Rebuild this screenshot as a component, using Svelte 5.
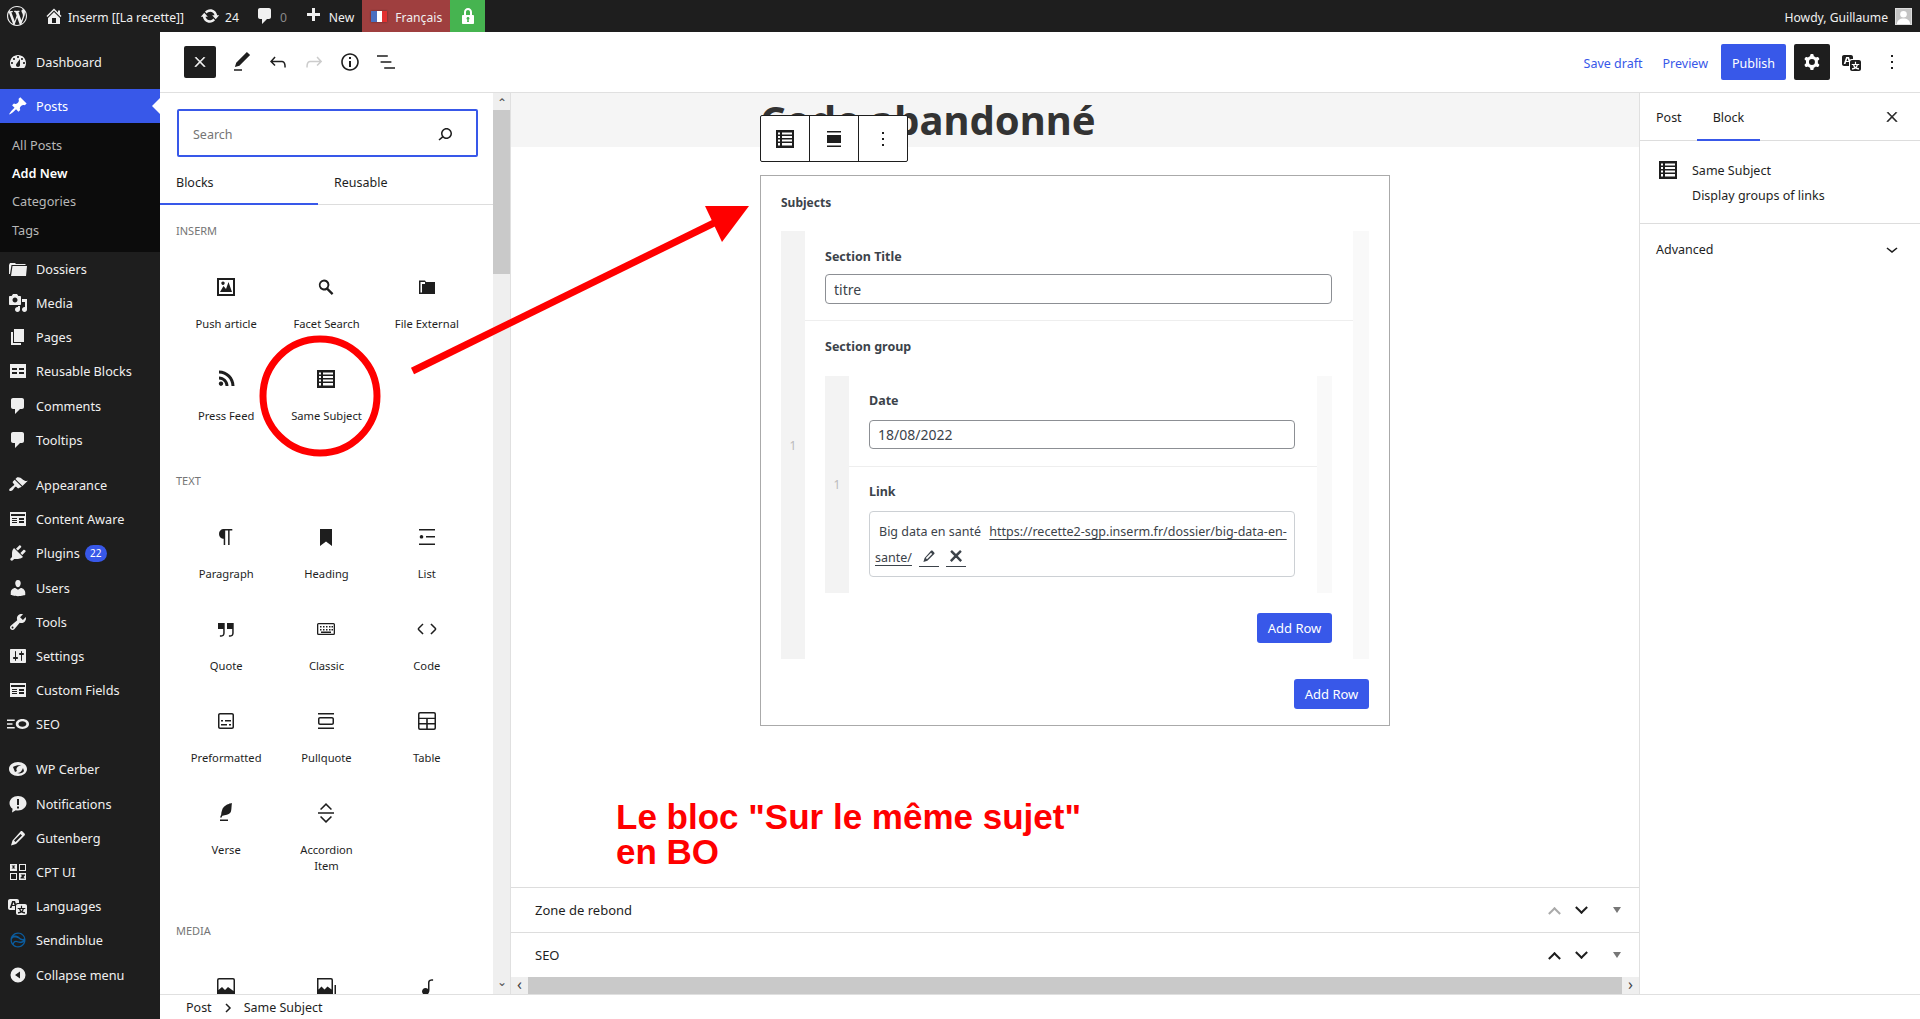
<script>
  const di = {
    dashboard: "M3.76 16h12.48c1.1-1.37 1.76-3.11 1.76-5 0-4.42-3.58-8-8-8s-8 3.58-8 8c0 1.89.66 3.63 1.76 5zM10 4c.55 0 1 .45 1 1s-.45 1-1 1-1-.45-1-1 .45-1 1-1zM6 6c.55 0 1 .45 1 1s-.45 1-1 1-1-.45-1-1 .45-1 1-1zm8 0c.55 0 1 .45 1 1s-.45 1-1 1-1-.45-1-1 .45-1 1-1zm-5.37 5.55L12 7v6c0 1.1-.9 2-2 2s-2-.9-2-2c0-.57.24-1.08.63-1.45zM4 10c.55 0 1 .45 1 1s-.45 1-1 1-1-.45-1-1 .45-1 1-1zm12 0c.55 0 1 .45 1 1s-.45 1-1 1-1-.45-1-1 .45-1 1-1z",
    pin: "M10.44 3.02l1.82-1.82 6.36 6.35-1.83 1.82c-1.05-.68-2.48-.57-3.41.36l-.75.75c-.92.93-1.04 2.35-.35 3.41l-1.83 1.82-2.41-2.41-2.8 2.79c-.42.42-3.38 2.71-3.8 2.29s1.86-3.39 2.28-3.81l2.79-2.79L4.1 9.36l1.83-1.82c1.05.69 2.48.57 3.4-.36l.75-.75c.93-.92 1.05-2.35.36-3.41z",
    folder: "M1 6l1-2h5l1 1h9l1 1H3.5L2 15H1zM4.5 7H19l-1 10H3z",
    media: "M13 11V4c0-.55-.45-1-1-1h-1.67L9 1H5L3.67 3H2c-.55 0-1 .45-1 1v7c0 .55.45 1 1 1h10c.55 0 1-.45 1-1zM7 4.5c1.38 0 2.5 1.12 2.5 2.5S8.38 9.5 7 9.5 4.5 8.38 4.5 7 5.62 4.5 7 4.5zM14 6h5v10.5c0 1.38-1.12 2.5-2.5 2.5S14 17.88 14 16.5s1.12-2.5 2.5-2.5c.17 0 .34.02.5.05V9h-3V6zm-4 8.05V13h2v3.5c0 1.38-1.12 2.5-2.5 2.5S7 17.88 7 16.5 8.12 14 9.5 14c.17 0 .34.02.5.05z",
    pages: "M6 15V2h10v13H6zm-1 1h8v2H3V5h2v11z",
    table: "M2 3h16v14H2zM4 7v2h5V7zm7 0v2h5V7zM4 11v2h5v-2zm7 0v2h5v-2z",
    comment: "M5 2h9c1.1 0 2 .9 2 2v7c0 1.1-.9 2-2 2h-2l-5 5v-5H5c-1.1 0-2-.9-2-2V4c0-1.1.9-2 2-2z",
    brush: "M14.48 11.06L7.41 3.99l1.5-1.5c.5-.56 2.3-.47 3.51.32 1.21.8 1.43 1.28 2.91 2.1 1.18.64 2.45 1.26 4.45.85zm-.71.71L6.7 4.7 4.93 6.47c-.39.39-.39 1.02 0 1.41l1.06 1.06c.39.39.39 1.03 0 1.42-.6.6-1.43 1.11-2.21 1.69-.35.26-.7.53-1.01.84C1.43 13.23.91 14.74 1.3 15.4c.38.66 1.89 1.15 3.22-.12.33-.31.59-.66.85-1.01.57-.78 1.08-1.61 1.69-2.21.39-.39 1.02-.39 1.41 0l1.06 1.06c.39.39 1.02.39 1.41 0z",
    fields: "M2 3h16v14H2zm1 2v2h14V5zM4 9v1h5V9zm0 2v1h5v-1zm0 2v1h5v-1zm7-4v2h5V9zm0 3v2h5v-2z",
    plugin: "M13.11 4.36L9.87 7.6 8 5.73l3.24-3.24c.35-.34 1.05-.2 1.56.32.52.51.66 1.21.31 1.55zm-8 1.77l.91-1.12 9.01 9.01-1.19.84c-.71.71-2.63 1.16-3.82 1.16H6.14L4.9 17.26c-.59.59-1.54.59-2.12 0-.59-.58-.59-1.53 0-2.12l1.24-1.24v-3.88c0-1.13.4-3.19 1.09-3.89zm7.26 3.97l3.24-3.24c.34-.35 1.04-.21 1.55.31.52.51.66 1.21.31 1.55l-3.24 3.25z",
    users: "M10 9.25c-2.27 0-2.73-3.44-2.73-3.44C7 4.02 7.82 2 9.97 2c2.16 0 2.98 2.02 2.71 3.81 0 0-.41 3.44-2.68 3.44zm0 2.57L12.72 10c2.39 0 4.52 2.33 4.52 4.53v2.49s-3.65 1.13-7.24 1.13c-3.65 0-7.24-1.13-7.24-1.13v-2.49c0-2.25 1.94-4.48 4.47-4.48z",
    tools: "M16.68 9.77c-1.34 1.34-3.3 1.67-4.95.99l-5.41 6.52c-.99.99-2.59.99-3.58 0s-.99-2.59 0-3.57l6.52-5.42c-.68-1.65-.35-3.61.99-4.95 1.28-1.28 3.12-1.62 4.72-1.06l-2.89 2.89 2.82 2.82 2.86-2.87c.53 1.58.18 3.39-1.08 4.65zM3.81 16.21c.4.39 1.04.39 1.43 0 .4-.4.4-1.04 0-1.43-.39-.4-1.03-.4-1.43 0-.39.39-.39 1.03 0 1.43z",
    settings: "M18 16V4c0-.55-.45-1-1-1H3c-.55 0-1 .45-1 1v12c0 .55.45 1 1 1h14c.55 0 1-.45 1-1zM8 11h1c.55 0 1 .45 1 1s-.45 1-1 1H8v1.5c0 .28-.22.5-.5.5s-.5-.22-.5-.5V13H6c-.55 0-1-.45-1-1s.45-1 1-1h1V5.5c0-.28.22-.5.5-.5s.5.22.5.5V11zm5-2h-1c-.55 0-1-.45-1-1s.45-1 1-1h1V5.5c0-.28.22-.5.5-.5s.5.22.5.5V7h1c.55 0 1 .45 1 1s-.45 1-1 1h-1v5.5c0 .28-.22.5-.5.5s-.5-.22-.5-.5V9z",
    seo: "M-2 6h9v1.3h-9zM-2 9.4h7v1.3h-7zM-2 12.8h9v1.3h-9zM14 5.5c3.6 0 6 2 6 4.5s-2.4 4.5-6 4.5-6-2-6-4.5 2.4-4.5 6-4.5zm0 2c-2 0-3.6 1.1-3.6 2.5s1.6 2.5 3.6 2.5 3.6-1.1 3.6-2.5S16 7.5 14 7.5z",
    cerber: "M10 3c5 0 9 3 9 7s-4 7-9 7-9-3-9-7 4-7 9-7zm-5 5l2 5 2-1c-1-1-1-3 1-4.500 1-.7 3-.8 4-.5-2-1.500-6-1-9 1zm10 1c-1 3-3 5-6 5 3 1 6 0 7-2z",
    notify: "M10 2c4.700 0 8.500 3.200 8.500 7.300 0 4-3.800 7.200-8.500 7.200-.8 0-1.500-.1-2.200-.3L4 18.500l.6-3.700c-1.900-1.300-3.100-3.300-3.100-5.500C1.500 5.200 5.300 2 10 2zM9 5v6h2V5zm0 7.500v2h2v-2z",
    pencil: "M14.500 3.500l2 2c.6.6.6 1.500 0 2.100L8 16l-5 1.500L4.500 12.500 12.500 3.500c.5-.6 1.400-.6 2 0zM6 12.500l1.500 1.500L14 7.500 12.500 6z",
    cpt: "M2 2h7v7H2zM3.500 3.500l1.500 1.500-1.500 1.500h4L6 5l1.500-1.500zM11 2h7v7h-7zm1 1v5h5V3zM2 11h7v7H2zm1 1v5h5v-5zM11 11h7v7h-7zM12.500 12.500L14 14l-1.500 1.500 0 1h4.500l-1.500-1.500 1.500-1.500v-1z",
    lang: "M11 7H9.49c-.63 0-1.25.3-1.59.7L7 5H4.13l-2.39 7h1.69l.74-2H7v4H2c-1.1 0-2-.9-2-2V5c0-1.1.9-2 2-2h7c1.1 0 2 .9 2 2v2zM6.51 9H4.49l1-2.93zM10 8h7c1.1 0 2 .9 2 2v7c0 1.1-.9 2-2 2h-7c-1.1 0-2-.9-2-2v-7c0-1.1.9-2 2-2zm7.25 5v-1.08h-3.17V9.75h-1.16v2.17H9.75V13h1.28c.11.85.56 1.85 1.28 2.62-.87.36-1.89.62-2.31.62-.01.02.22.97.2 1.46.84 0 2.21-.5 3.28-1.15 1.09.65 2.48 1.15 3.34 1.15-.02-.49.2-1.44.2-1.46-.43 0-1.49-.26-2.38-.63.7-.77 1.14-1.77 1.25-2.61h1.36zm-3.81 1.93c-.5-.46-.85-1.13-1.01-1.93h2.09c-.17.8-.51 1.47-1 1.93l-.04.03s-.03-.02-.04-.03z",
    send: "M10 2.500c4.200 0 7.500 3.300 7.500 7.500s-3.300 7.500-7.500 7.500-7.500-3.300-7.500-7.500 3.300-7.500 7.500-7.500zm0 1.200c-1.800 0-3.400.8-4.500 2 1.500-.5 3.500-.3 5 .8 1.200.9 2 2.200 4 2.500 1 .1 1.400-.2 1.700-.5-.5-2.700-3.100-4.800-6.200-4.800zM3.800 10c0 1.200.3 2.300 1 3.300.5-1.700 1.700-2.500 3.200-2.500 1.300 0 2.500.8 4 .8 1.200 0 2.300-.5 3-1.200-1.500.2-2.700-.5-3.800-1.400-1.700-1.300-4-1.900-6-1.200-.9.700-1.400 1.700-1.400 2.200zm2 4.500c1 1 2.700 1.800 4.200 1.800 2.700 0 5-1.800 5.900-4.200-1 .8-2.500 1.200-3.900 1-1.300-.2-2.700-1-4-1-1.300 0-2 1-2.200 2.400z",
    collapse: "M10 2.500a7.500 7.500 0 1 1 0 15 7.500 7.500 0 0 1 0-15zM12 6.500v7L7 10z",
    wp: "M20 10c0-5.510-4.490-10-10-10C4.480 0 0 4.490 0 10c0 5.520 4.480 10 10 10 5.510 0 10-4.480 10-10zM7.780 15.370L4.370 6.220c.55-.02 1.170-.08 1.170-.08.5-.06.44-1.130-.06-1.110 0 0-1.450.11-2.370.11-.18 0-.37 0-.58-.01C4.120 2.690 6.870 1.110 10 1.110c2.330 0 4.450.87 6.050 2.340-.68-.11-1.650.39-1.650 1.580 0 .74.45 1.360.9 2.100.35.61.55 1.360.55 2.460 0 1.490-1.400 5-1.400 5l-3.030-8.370c.54-.02.82-.17.82-.17.5-.05.44-1.250-.06-1.220 0 0-1.440.12-2.380.12-.87 0-2.330-.12-2.330-.12-.5-.03-.56 1.200-.06 1.220l.92.08 1.260 3.410zM17.410 10c.24-.64.74-1.870.43-4.250.7 1.290 1.050 2.710 1.050 4.250 0 3.290-1.730 6.240-4.400 7.780.97-2.590 1.940-5.200 2.920-7.780zM6.100 18.090C3.120 16.650 1.110 13.530 1.110 10c0-1.300.23-2.480.72-3.590C3.250 10.300 4.670 14.200 6.100 18.090zm4.030-6.630l2.580 6.980c-.86.29-1.760.45-2.710.45-.79 0-1.570-.11-2.290-.33.81-2.380 1.620-4.740 2.420-7.100z",
    home: "M16 8.500l1.530 1.530-1.060 1.060L10 4.620l-6.470 6.470-1.060-1.060L10 2.500l4 4v-2h2v4zm-6-2.460l6 5.990V18H4v-5.970zM12 17v-5H8v5h4z",
    update: "M10.200 3.280c3.530 0 6.430 2.610 6.920 6h2.080l-3.500 4-3.500-4h2.320c-.45-1.970-2.210-3.450-4.320-3.450-1.450 0-2.730.71-3.540 1.780L4.950 5.660C6.230 4.200 8.110 3.280 10.200 3.280zm-.4 13.440c-3.520 0-6.430-2.610-6.920-6H.8l3.500-4c1.170 1.330 2.330 2.670 3.500 4H5.480c.45 1.970 2.210 3.450 4.320 3.450 1.450 0 2.730-.71 3.540-1.780l1.710 1.950c-1.280 1.460-3.150 2.380-5.250 2.380z",
    plus: "M17 7v3h-5v5H9v-5H4V7h5V2h3v5h5z",
    lock: "M14 9h1c.55 0 1 .45 1 1v7c0 .55-.45 1-1 1H5c-.55 0-1-.45-1-1v-7c0-.55.45-1 1-1h1V6c0-2.210 1.790-4 4-4s4 1.790 4 4v3zm-2 0V6c0-1.100-.9-2-2-2s-2 .9-2 2v3h4zm-1 7l-.36-2.150c.51-.24.86-.75.86-1.350 0-.83-.67-1.500-1.500-1.500s-1.500.67-1.500 1.500c0 .6.35 1.110.86 1.350L9 16h2z"
  };

  const wp = {
    close: "M13 11.8l6.1-6.3-1-1-6.1 6.2-6.1-6.2-1 1 6.1 6.3-6.5 6.7 1 1 6.5-6.6 6.5 6.6 1-1z",
    edit: "M20.1 5.1L16.9 2 6.2 12.7l-1.300 4.400 4.500-1.300L20.100 5.100zM4 20.800h8v-1.500H4v1.500z",
    undo: "M18.300 11.700c-.6-.6-1.400-.9-2.300-.9H6.700l2.900-3.300-1.100-1-4.500 5L8.500 16l1-1-2.700-2.700H16c.5 0 .9.2 1.300.5 1 1 1 3.400 1 4.500v.3h1.500v-.2c0-1.500 0-4.300-1.500-5.700z",
    redo: "M15.600 6.500l-1.100 1 2.900 3.300H8c-.9 0-1.700.3-2.300.9-1.400 1.500-1.400 4.200-1.400 5.600v.2h1.500v-.3c0-1.100 0-3.500 1-4.500.3-.3.7-.5 1.300-.5h9.200L14.500 15l1.100 1.100 4.600-4.600-4.600-5z",
    info: "M12 3.200c-4.800 0-8.800 3.900-8.800 8.800 0 4.800 3.900 8.800 8.800 8.800 4.800 0 8.800-3.900 8.800-8.800 0-4.800-4-8.800-8.800-8.800zm0 16c-4 0-7.200-3.300-7.200-7.200C4.800 8 8 4.800 12 4.800s7.200 3.300 7.200 7.200c0 4-3.200 7.200-7.200 7.200zM11 17h2v-6h-2v6zm0-8h2V7h-2v2z",
    listview: "M13.800 5.200H3v1.500h10.800V5.200zm-3.600 12v1.500H21v-1.500H10.200zm7.200-6H6.600v1.500h10.800v-1.500z",
    search: "M13.500 6C10.500 6 8 8.500 8 11.500c0 1.100.3 2.100.9 3l-3.400 3 1 1.100 3.400-2.900c1 .9 2.200 1.400 3.600 1.400 3 0 5.500-2.500 5.500-5.500C19 8.500 16.500 6 13.500 6zm0 9.500c-2.200 0-4-1.800-4-4s1.800-4 4-4 4 1.800 4 4-1.800 4-4 4z",
    cog: "M10.289 4.836A1 1 0 0111.275 4h1.306a1 1 0 01.987.836l.244 1.466c.787.26 1.503.679 2.108 1.218l1.393-.522a1 1 0 011.216.437l.653 1.13a1 1 0 01-.23 1.273l-1.148.944a6.025 6.025 0 010 2.435l1.149.946a1 1 0 01.23 1.272l-.653 1.13a1 1 0 01-1.216.437l-1.394-.522c-.605.54-1.32.958-2.108 1.218l-.244 1.466a1 1 0 01-.987.836h-1.306a1 1 0 01-.986-.836l-.244-1.466a5.995 5.995 0 01-2.108-1.218l-1.394.522a1 1 0 01-1.217-.436l-.653-1.131a1 1 0 01.23-1.272l1.149-.946a6.026 6.026 0 010-2.435l-1.148-.944a1 1 0 01-.23-1.272l.653-1.131a1 1 0 011.217-.437l1.393.522a5.994 5.994 0 012.108-1.218l.244-1.466zM14.929 12a3 3 0 11-6 0 3 3 0 016 0z",
    more: "M13 19h-2v-2h2v2zm0-6h-2v-2h2v2zm0-6h-2V5h2v2z",
    down: "M17.500 11.600L12 16l-5.500-4.400.9-1.200L12 14l4.500-3.600 1 1.200z",
    subject: "M3 3h18v18H3zM5 5.500v2h2v-2zm4 0v2h10v-2zM5 9v2h2V9zm4 0v2h10V9zM5 12.500v2h2v-2zm4 0v2h10v-2zM5 16v2.500h2V16zm4 0v2.500h10V16z",
    align: "M5 8h14v8H5zM5 4h14v1.500H5zM5 18.500h14V20H5z"
  };

  const blockIcons = {
    push: "M3 3h18v18H3zM5 5v14h14V5zM6 17l3.500-6 2.500 3 2.500-7 3.500 10zM9 6.500a1.700 1.700 0 1 1-.01 0z",
    facet: "M10 4.500a5.500 5.500 0 0 1 4.400 8.800l5 5-1.600 1.600-5-5A5.500 5.500 0 1 1 10 4.500zm0 2a3.500 3.500 0 1 0 .01 0z",
    file: "M4 5.500h6l1 1.500h9v12H4zM5.500 7v10.500H7V9h3V7z",
    rss: "M5 9.500c5.200 0 9.500 4.300 9.500 9.500h-3c0-3.600-2.900-6.500-6.500-6.500zM5 3.500c8.600 0 15.500 6.900 15.500 15.500h-3C17.500 12.100 11.900 6.500 5 6.500zM7 14.500a2.200 2.200 0 1 1-.01 0z",
    subject: wp.subject,
    para: "M18.300 4H9.900v-.1l-.9.2c-2.300.4-4 2.400-4 4.800s1.700 4.400 4 4.800l.7.1V20h1.500V5.500h2.900V20h1.500V5.500h2.700V4z",
    heading: "M6 4h12v17l-6-4.500L6 21z",
    list: "M4 4h16v1.500H4zM4 18.500h16V20H4zM11 11h9v1.500h-9zM6.500 10a1.800 1.800 0 1 1-.01 0z",
    quote: "M13 6v6h5.200v4c0 .8-.2 1.400-.5 1.700-.6.6-1.600.6-2.500.5h-.3v1.500h.5c1 0 2.300-.1 3.300-1 .6-.6 1-1.600 1-2.800V6H13zm-9 6h5.200v4c0 .8-.2 1.400-.5 1.700-.6.6-1.600.6-2.500.5h-.3v1.500h.5c1 0 2.300-.1 3.300-1 .6-.6 1-1.600 1-2.800V6H4v6z",
    keyboard: "M4.500 6h15A1.500 1.500 0 0 1 21 7.500v9a1.500 1.500 0 0 1-1.500 1.500h-15A1.500 1.500 0 0 1 3 16.500v-9A1.500 1.500 0 0 1 4.500 6zm0 1.300l-.2.200v9l.2.200h15l.2-.2v-9l-.2-.2zM6 9h1.500v1.500H6zm3 0h1.500v1.500H9zm3 0h1.500v1.500H12zm3 0h1.500v1.500H15zm2.500 0H19v1.500h-1.500zM6 12h1.500v1.500H6zm3 0h1.500v1.500H9zm3 0h1.500v1.500H12zm3 0h1.500v1.500H15zm2.500 0H19v1.500h-1.500zM7 14.500h10V16H7z",
    code: "M20.800 10.700l-4.300-4.300-1.100 1.100 4.300 4.300c.1.100.1.3 0 .4l-4.300 4.300 1.100 1.100 4.300-4.300c.7-.8.7-1.900 0-2.600zM4.200 11.800l4.300-4.300-1-1-4.300 4.300c-.7.700-.7 1.800 0 2.500l4.300 4.300 1.100-1.100-4.300-4.300c-.2-.1-.2-.3-.1-.4z",
    pre: "M18 4H6c-1.100 0-2 .9-2 2v12c0 1.100.9 2 2 2h12c1.100 0 2-.9 2-2V6c0-1.100-.9-2-2-2zm.5 14c0 .3-.2.5-.5.5H6c-.3 0-.5-.2-.5-.5V6c0-.3.2-.5.5-.5h12c.3 0 .5.2.5.5v12zM7 16.500h6V15H7v1.500zm4-4h6V11h-6v1.500zM9 11H7v1.500h2V11zm6 5.500h2V15h-2v1.500z",
    pull: "M18 8H6c-1.100 0-2 .9-2 2v4c0 1.100.9 2 2 2h12c1.100 0 2-.9 2-2v-4c0-1.100-.9-2-2-2zm.5 6c0 .3-.2.5-.5.5H6c-.3 0-.5-.2-.5-.5v-4c0-.3.2-.5.5-.5h12c.3 0 .5.2.5.500v4zM4 4v1.500h16V4H4zm0 16h16v-1.500H4V20z",
    table: "M5 3h14a2 2 0 0 1 2 2v14a2 2 0 0 1-2 2H5a2 2 0 0 1-2-2V5a2 2 0 0 1 2-2zm0 1.500l-.5.500v3.700h15V5l-.5-.5zM4.500 10v4h6.700v-4zm8.300 0v4h6.700v-4zM4.500 15.500V19l.5.500h6.200v-4zm8.300 0v4H19l.5-.5v-3.500z",
    verse: "M17.800 2l-.9.3c-.1 0-3.600 1-5.200 2.100C10 5.500 9.300 6.500 8.900 7.100c-.6.900-1.700 4.700-1.700 6.300l-.9 2.300c-.2.400 0 .8.400 1 .1 0 .2.1.3.1.3 0 .6-.2.7-.5l.6-1.500c.3 0 .7-.1 1.200-.2.700-.1 1.400-.3 2.200-.5.8-.2 1.600-.5 2.400-.8.700-.3 1.400-.7 1.900-1.200s.8-1.200 1-1.900c.2-.7.3-1.600.4-2.400.1-.8.100-1.700.2-2.500 0-.8.1-1.500.2-2.100V2zM6 20h8v-1.500H6V20z",
    accordion: "M12 2l6 6-1.100 1.100L12 4.200 7.100 9.100 6 8zM4 11.200h16v1.600H4zM12 22l-6-6 1.100-1.100 4.900 4.900 4.900-4.900L18 16z",
    image: "M5 3h14a2 2 0 0 1 2 2v14a2 2 0 0 1-2 2H5a2 2 0 0 1-2-2V5a2 2 0 0 1 2-2zm0 1.500l-.5.500v10l3.500-3 3 3 3-3 5.500 4V5l-.5-.5z",
    gallery: "M3 3h14a2 2 0 0 1 2 2v14a2 2 0 0 1-2 2H3zm1.500 1.500v10l3-3 3 3 3-3 4 3V5l-.5-.5zM20.500 10H22v11h-1.500z",
    audio: "M17.700 4.300c-1.200 0-2.800 0-3.800 1-.6.600-.9 1.500-.9 2.600V14c-.6-.6-1.500-1-2.500-1C8.600 13 7 14.600 7 16.500S8.600 20 10.500 20c1.500 0 2.800-1 3.300-2.300.5-.8.700-1.800.7-2.700V7.900c0-.7.200-1.200.5-1.600.6-.6 1.800-.6 2.800-.6h.3V4.300h-.6z"
  };

  const menuA = [
    { name: "Dossiers", d: di.folder },
    { name: "Media", d: di.media },
    { name: "Pages", d: di.pages },
    { name: "Reusable Blocks", d: di.table },
    { name: "Comments", d: di.comment },
    { name: "Tooltips", d: di.comment }
  ];
  const menuB = [
    { name: "Appearance", d: di.brush },
    { name: "Content Aware", d: di.fields },
    { name: "Plugins", d: di.plugin, badge: "22" },
    { name: "Users", d: di.users },
    { name: "Tools", d: di.tools },
    { name: "Settings", d: di.settings },
    { name: "Custom Fields", d: di.fields },
    { name: "SEO", d: di.seo }
  ];
  const menuC = [
    { name: "WP Cerber", d: di.cerber },
    { name: "Notifications", d: di.notify },
    { name: "Gutenberg", d: di.pencil },
    { name: "CPT UI", d: di.cpt },
    { name: "Languages", d: di.lang },
    { name: "Sendinblue", d: di.send, blue: true },
    { name: "Collapse menu", d: di.collapse }
  ];

  // media row is scrolled off under the footer, only its icons show
  const sections = [
    {
      title: "INSERM",
      items: [
        ["Push article", blockIcons.push],
        ["Facet Search", blockIcons.facet],
        ["File External", blockIcons.file],
        ["Press Feed", blockIcons.rss],
        ["Same Subject", blockIcons.subject]
      ]
    },
    {
      title: "TEXT",
      items: [
        ["Paragraph", blockIcons.para],
        ["Heading", blockIcons.heading],
        ["List", blockIcons.list],
        ["Quote", blockIcons.quote],
        ["Classic", blockIcons.keyboard],
        ["Code", blockIcons.code],
        ["Preformatted", blockIcons.pre],
        ["Pullquote", blockIcons.pull],
        ["Table", blockIcons.table],
        ["Verse", blockIcons.verse],
        ["Accordion Item", blockIcons.accordion]
      ]
    },
    {
      title: "MEDIA",
      items: [
        ["", blockIcons.image],
        ["", blockIcons.gallery],
        ["", blockIcons.audio]
      ]
    }
  ];
</script>

{#snippet icon(d, size = 24, box = 24)}
  <svg width={size} height={size} viewBox="0 0 {box} {box}" fill="currentColor"><path fill-rule="evenodd" {d} /></svg>
{/snippet}

{#snippet menuItem(item)}
  <li class="item" class:blue={item.blue}>
    <span class="mi">{@render icon(item.d, item.name === "SEO" ? 22 : 20, 20)}</span>
    <span>{item.name}</span>
    {#if item.badge}<span class="badge">{item.badge}</span>{/if}
  </li>
{/snippet}

<div class="page">
  <header class="adminbar">
    <span class="ab logo">{@render icon(di.wp, 20, 20)}</span>
    <span class="ab site">{@render icon(di.home, 20, 20)}<span>Inserm [[La recette]]</span></span>
    <span class="ab updates">{@render icon(di.update, 20, 20)}<span>24</span></span>
    <span class="ab comments">{@render icon(di.comment, 20, 20)}<span class="dim">0</span></span>
    <span class="ab newpost">{@render icon(di.plus, 20, 20)}<span>New</span></span>
    <span class="ab langitem"><i class="flag"><b></b><b></b><b></b></i><span>Français</span></span>
    <span class="ab lock">{@render icon(di.lock, 20, 20)}</span>
    <span class="howdy"><span>Howdy, Guillaume</span><i class="avatar"><svg width="15" height="15" viewBox="0 0 16 16" fill="#fff"><circle cx="8" cy="5.500" r="3.500" /><path d="M1 16c0-4 3-6 7-6s7 2 7 6z" /></svg></i></span>
  </header>

  <div class="main">
    <nav class="menu">
      <ul class="first">
        <li class="item">
          <span class="mi">{@render icon(di.dashboard, 20, 20)}</span><span>Dashboard</span>
        </li>
      </ul>
      <div class="current"><span class="mi">{@render icon(di.pin, 20, 20)}</span><span>Posts</span></div>
      <ul class="sub">
        <li>All Posts</li>
        <li class="on">Add New</li>
        <li>Categories</li>
        <li>Tags</li>
      </ul>
      <ul class="group">{#each menuA as m}{@render menuItem(m)}{/each}</ul>
      <ul class="group">{#each menuB as m}{@render menuItem(m)}{/each}</ul>
      <ul class="group">{#each menuC as m}{@render menuItem(m)}{/each}</ul>
    </nav>

    <div class="workspace">
      <div class="topbar">
        <div class="tools">
          <button class="closebtn">{@render icon(wp.close, 16)}</button>
          <span class="tb">{@render icon(wp.edit)}</span>
          <span class="tb">{@render icon(wp.undo)}</span>
          <span class="tb muted">{@render icon(wp.redo)}</span>
          <span class="tb">{@render icon(wp.info)}</span>
          <span class="tb">{@render icon(wp.listview)}</span>
        </div>
        <div class="actions">
          <span class="link save">Save draft</span>
          <span class="link preview">Preview</span>
          <button class="publish">Publish</button>
          <button class="cog">{@render icon(wp.cog)}</button>
          <span class="tb trans">{@render icon(di.lang, 20, 20)}</span>
          <span class="tb dots">{@render icon(wp.more)}</span>
        </div>
      </div>

      <div class="panes">
        <aside class="inserter">
          <div class="inserter-body">
            <div class="search">
              <span>Search</span>
              {@render icon(wp.search)}
            </div>
            <div class="tabs">
              <span class="tab active">Blocks</span>
              <span class="tab">Reusable</span>
            </div>
            {#each sections as section}
              <h3>{section.title}</h3>
              <div class="grid">
                {#each section.items as [label, d]}
                  <div class="block-item">
                    {@render icon(d)}
                    {#if label}<span>{label}</span>{/if}
                  </div>
                {/each}
              </div>
            {/each}
          </div>
          <div class="vscroll">
            <span class="arrow">&#x2303;</span>
            <span class="thumb"></span>
            <span class="track"></span>
            <span class="arrow dn">&#x2304;</span>
          </div>
        </aside>

        <main class="editor">
          <div class="canvas">
            <div class="title-strip"><h1>Code abandonné</h1></div>
            <div class="block-toolbar">
              <span>{@render icon(wp.subject)}</span>
              <span>{@render icon(wp.align)}</span>
              <span>{@render icon(wp.more)}</span>
            </div>
            <section class="block">
              <div class="block-label">Subjects</div>
              <div class="repeater">
                <div class="handle">1</div>
                <div class="rows">
                  <div class="field">
                    <label for="sec-title">Section Title</label>
                    <input id="sec-title" value="titre" readonly />
                  </div>
                  <div class="field group-field">
                    <div class="field-label">Section group</div>
                    <div class="repeater nested">
                      <div class="handle">1</div>
                      <div class="rows">
                        <div class="field inner date">
                          <label for="date">Date</label>
                          <input id="date" value="18/08/2022" readonly />
                        </div>
                        <div class="field inner linkfield">
                          <div class="field-label">Link</div>
                          <div class="linkbox">
                            <span class="linktitle">Big data en santé</span>
                            <a href="#top">https://recette2-sgp.inserm.fr/dossier/big-data-en-sante/</a>
                            <span class="lb">{@render icon(di.pencil, 16, 20)}</span>
                            <span class="lb lbx">{@render icon(wp.close, 16)}</span>
                          </div>
                        </div>
                      </div>
                      <div class="rside"></div>
                    </div>
                    <div class="btnrow"><button class="add">Add Row</button></div>
                  </div>
                </div>
                <div class="rside"></div>
              </div>
              <div class="btnrow"><button class="add">Add Row</button></div>
            </section>
          </div>
          <div class="metabox">
            <span>Zone de rebond</span>
            <i class="chev light"></i><i class="chev down"></i><i class="tri"></i>
          </div>
          <div class="metabox">
            <span>SEO</span>
            <i class="chev"></i><i class="chev down"></i><i class="tri"></i>
          </div>
          <div class="hscroll">
            <span class="harrow">&#x2039;</span>
            <span class="hthumb"></span>
            <span class="harrow">&#x203a;</span>
          </div>
        </main>

        <aside class="settings">
          <div class="stabs">
            <span class="stab first-tab">Post</span>
            <span class="stab active">Block</span>
            <span class="sclose">{@render icon(wp.close, 16)}</span>
          </div>
          <div class="card">
            {@render icon(wp.subject)}
            <div>
              <div>Same Subject</div>
              <div class="desc">Display groups of links</div>
            </div>
          </div>
          <div class="advanced">
            <span>Advanced</span>
            {@render icon(wp.down)}
          </div>
        </aside>
      </div>

      <footer class="crumbs">
        <span>Post</span>
        <svg width="8" height="10" viewBox="0 0 8 10" fill="none" stroke="#1e1e1e" stroke-width="1.500"><path d="M2 1l4 4-4 4" /></svg>
        <span>Same Subject</span>
      </footer>
    </div>
  </div>

  <svg class="marks" width="1920" height="1019" viewBox="0 0 1920 1019">
    <circle cx="320" cy="396" r="57" fill="none" stroke="#f00" stroke-width="7" />
    <path d="M412.500 371L716 222" fill="none" stroke="#f00" stroke-width="7" />
    <path d="M749 206H705L722 242z" fill="#f00" />
  </svg>
  <div class="note">Le bloc "Sur le même sujet"<br />en BO</div>
</div>

<style>
  :global(body) {
    margin: 0;
  }
  .page {
    position: relative;
    height: 100vh;
    display: flex;
    flex-direction: column;
    overflow: hidden;
    font-family: "Noto Sans", sans-serif;
    font-size: 12.5px;
    color: #1e1e1e;
    background: #fff;
  }
  svg {
    display: block;
    flex: none;
  }
  ul {
    list-style: none;
    margin: 0;
    padding: 0;
  }
  button {
    font: inherit;
    border: 0;
    cursor: pointer;
  }

  .adminbar {
    height: 32px;
    flex: none;
    display: flex;
    align-items: center;
    background: #1e1e1e;
    color: #f0f0f0;
    font-size: 12.15px;
  }
  .ab {
    height: 32px;
    display: flex;
    align-items: center;
    padding: 0 8px;
    box-sizing: border-box;
  }
  .ab > span,
  .howdy > span {
    padding-top: 2px;
  }
  .logo {
    width: 36px;
    padding: 0 7px;
  }
  .site {
    gap: 4px;
  }
  .updates {
    gap: 5px;
  }
  .comments {
    gap: 5px;
  }
  .dim {
    color: #8a8a8a;
  }
  .newpost {
    gap: 6px;
  }
  .langitem {
    width: 88px;
    gap: 8px;
    padding: 0 0 0 9px;
    background: #9f3f3f;
  }
  .flag {
    display: flex;
    width: 16px;
    height: 11px;
    box-shadow: 0 0 2px #0006;
  }
  .flag b {
    flex: 1;
    background: #fff;
  }
  .flag b:first-child {
    background: #4a6fc0;
  }
  .flag b:last-child {
    background: #e23030;
  }
  .lock {
    width: 35px;
    padding: 0 8px;
    background: #46b450;
    color: #fff;
  }
  .howdy {
    margin-left: auto;
    display: flex;
    align-items: center;
    gap: 7px;
    padding-right: 8px;
  }
  .avatar {
    width: 15px;
    height: 15px;
    background: #c4c4c4;
    overflow: hidden;
    border: 1px solid #ddd;
  }

  .main {
    flex: 1;
    min-height: 0;
    display: flex;
  }
  .menu {
    width: 160px;
    flex: none;
    background: #1e1e1e;
    color: #f0f0f0;
    font-size: 12.7px;
  }
  .first {
    padding: 13px 0 10px;
  }
  .item,
  .current {
    height: 34px;
    display: flex;
    align-items: center;
  }
  .group .item {
    height: 34.2px;
  }
  .group + .group {
    margin-top: 11px;
  }
  .mi {
    width: 36px;
    flex: none;
    display: flex;
    justify-content: center;
    color: #eee;
  }
  .current {
    position: relative;
    background: #3858e9;
    color: #fff;
  }
  .current .mi {
    color: #fff;
  }
  .current::after {
    content: "";
    position: absolute;
    right: 0;
    top: 50%;
    margin-top: -8px;
    border: 8px solid transparent;
    border-right-color: #fff;
    border-left-width: 0;
  }
  .sub {
    background: #0c0c0c;
    padding: 8px 0 8px 12px;
    color: #b8b8b8;
  }
  .sub li {
    height: 28.2px;
    line-height: 28px;
  }
  .sub .on {
    color: #fff;
    font-weight: 600;
  }
  .blue .mi {
    color: #0b5c9e;
  }
  .badge {
    margin-left: 5px;
    min-width: 22px;
    height: 17px;
    line-height: 17px;
    border-radius: 9px;
    background: #3858e9;
    color: #fff;
    font-size: 10px;
    text-align: center;
  }

  .workspace {
    flex: 1;
    min-width: 0;
    display: flex;
    flex-direction: column;
  }
  .topbar {
    height: 61px;
    flex: none;
    box-sizing: border-box;
    border-bottom: 1px solid #e0e0e0;
    display: flex;
    align-items: center;
    justify-content: space-between;
  }
  .tools {
    display: flex;
    align-items: center;
    padding-left: 24px;
    gap: 8px;
  }
  .tools .tb {
    width: 28px;
    display: flex;
    justify-content: center;
  }
  .tools .closebtn {
    margin-right: 3.5px;
  }
  .muted {
    color: #ccc;
  }
  .closebtn {
    width: 32px;
    height: 32px;
    display: flex;
    align-items: center;
    justify-content: center;
    padding: 0;
    background: #1e1e1e;
    color: #fff;
    border-radius: 2px;
  }
  .closebtn path,
  .sclose path {
    stroke: currentColor;
    stroke-width: 1;
  }
  .lbx path {
    stroke: currentColor;
    stroke-width: 2.2;
  }
  .actions {
    display: flex;
    align-items: center;
  }
  .link {
    color: #3858e9;
    padding-top: 2px;
  }
  .save {
    margin-right: 20px;
  }
  .preview {
    margin-right: 13px;
  }
  .publish {
    width: 65px;
    height: 36px;
    padding: 2px 0 0;
    background: #3858e9;
    color: #fff;
    border-radius: 2px;
  }
  .cog {
    width: 36px;
    height: 36px;
    margin-left: 8px;
    padding: 0 6px;
    background: #1e1e1e;
    color: #fff;
    border-radius: 2px;
  }
  .trans {
    margin-left: 12px;
  }
  .dots {
    margin: 0 16px 0 18px;
  }

  .panes {
    flex: 1;
    min-height: 0;
    display: flex;
  }
  .inserter {
    width: 351px;
    flex: none;
    box-sizing: border-box;
    border-right: 1px solid #e0e0e0;
    display: flex;
  }
  .inserter-body {
    flex: 1;
    min-width: 0;
    overflow: hidden;
  }
  .search {
    margin: 16px 15px 0 17px;
    height: 48px;
    box-sizing: border-box;
    border: 2px solid #3858e9;
    border-radius: 2px;
    display: flex;
    align-items: center;
    justify-content: space-between;
    padding: 2px 19px 0 14px;
    color: #757575;
  }
  .search svg {
    color: #1e1e1e;
  }
  .tabs {
    display: flex;
    height: 48px;
    border-bottom: 1px solid #ddd;
    box-sizing: border-box;
  }
  .tab {
    flex: 1;
    padding: 17px 16px 0;
    margin-bottom: -1px;
  }
  .tab.active {
    flex: none;
    width: 158px;
    box-sizing: border-box;
    border-bottom: 2px solid #3858e9;
  }
  h3 {
    margin: 18px 16px 36px;
    font-size: 11px;
    line-height: 16px;
    font-weight: 400;
    color: #757575;
  }
  .grid {
    display: grid;
    grid-template-columns: repeat(3, 100.33px);
    padding: 0 16px;
    margin-bottom: 14px;
  }
  .block-item {
    display: flex;
    flex-direction: column;
    align-items: center;
    text-align: center;
    font-size: 11.2px;
    line-height: 16px;
    gap: 17px;
    padding: 0 13px 35px;
    box-sizing: border-box;
  }
  .grid + h3 {
    margin-top: 0;
  }
  .vscroll {
    width: 17px;
    flex: none;
    display: flex;
    flex-direction: column;
    background: #efefef;
    color: #555;
  }
  .arrow {
    height: 17px;
    line-height: 20px;
    text-align: center;
    font-size: 12px;
  }
  .arrow.dn {
    line-height: 10px;
  }
  .thumb {
    height: 164px;
    background: #c9c9c9;
  }
  .track {
    flex: 1;
  }

  .editor {
    flex: 1;
    min-width: 0;
    display: flex;
    flex-direction: column;
  }
  .canvas {
    position: relative;
    flex: 1;
    min-height: 0;
    overflow: hidden;
  }
  .title-strip {
    height: 54px;
    background: #f5f5f5;
  }
  h1 {
    width: 630px;
    margin: 0 auto;
    font-size: 40px;
    line-height: 54px;
    font-weight: 700;
    color: #333;
  }
  .block-toolbar {
    position: absolute;
    left: 249px;
    top: 22px;
    display: flex;
    height: 47px;
    box-sizing: border-box;
    background: #fff;
    border: 1px solid #1e1e1e;
    border-radius: 2px;
  }
  .block-toolbar span {
    width: 48px;
    display: flex;
    align-items: center;
    justify-content: center;
    border-right: 1px solid #1e1e1e;
  }
  .block-toolbar span:last-child {
    border-right: 0;
  }
  .block {
    width: 630px;
    margin: 28px auto 0;
    box-sizing: border-box;
    border: 1px solid #aaa;
    padding: 17px 20px 16px;
    color: #3c434a;
  }
  .block-label {
    font-weight: 700;
    font-size: 12px;
    line-height: 20px;
    margin-bottom: 18px;
  }
  .repeater {
    display: flex;
  }
  .handle {
    width: 24px;
    flex: none;
    background: #f3f3f3;
    color: #bbb;
    display: flex;
    align-items: center;
    justify-content: center;
    font-size: 12px;
  }
  .rside {
    width: 16px;
    flex: none;
    background: #f9f9f9;
  }
  .rows {
    flex: 1;
    min-width: 0;
  }
  .field {
    padding: 16px 21px 16px 20px;
    border-bottom: 1px solid #eee;
  }
  .field label,
  .field-label {
    display: block;
    font-weight: 700;
    font-size: 12.5px;
    line-height: 20px;
    margin-bottom: 7px;
  }
  .field input {
    display: block;
    width: 100%;
    height: 30px;
    box-sizing: border-box;
    border: 1px solid #8c8f94;
    border-radius: 4px;
    padding: 0 8px;
    font: inherit;
    font-size: 14px;
    color: #3c434a;
    outline: 0;
  }
  .group-field {
    border-bottom: 0;
  }
  .group-field > .field-label {
    margin-bottom: 19px;
  }
  .nested .rside {
    width: 15px;
  }
  .inner {
    padding: 15px 22px 17px 20px;
  }
  .date label {
    margin-bottom: 9px;
  }
  .date input {
    height: 29px;
  }
  .linkfield {
    border-bottom: 0;
    padding: 15px 22px 16px 20px;
  }
  .linkfield .field-label {
    margin-bottom: 9px;
  }
  .linkbox {
    box-sizing: border-box;
    height: 66px;
    border: 1px solid #ccd0d4;
    border-radius: 4px;
    padding: 7px 4px 0 5px;
    line-height: 26px;
    font-size: 12.5px;
    color: #3c434a;
  }
  .linktitle {
    padding: 0 5px 0 4px;
  }
  .linkbox a {
    color: #3c434a;
    text-decoration: underline;
    text-underline-offset: 3px;
  }
  .lb {
    display: inline-block;
    vertical-align: -5px;
    width: 20px;
    height: 21px;
    margin-left: 4px;
    padding-top: 2px;
    box-sizing: border-box;
    border-bottom: 1px solid #3c434a;
  }
  .lb svg {
    margin: 0 auto;
  }
  .btnrow {
    display: flex;
    justify-content: flex-end;
    margin-top: 20px;
  }
  .add {
    width: 75px;
    height: 30px;
    padding: 0;
    background: #3858e9;
    color: #fff;
    border-radius: 3px;
    font-size: 13px;
  }
  .metabox {
    height: 45px;
    flex: none;
    box-sizing: border-box;
    border-top: 1px solid #ddd;
    padding: 0 18px 0 24px;
    display: flex;
    align-items: center;
    gap: 18px;
    font-size: 13px;
  }
  .metabox span {
    flex: 1;
  }
  .chev {
    width: 7px;
    height: 7px;
    border-left: 2px solid #1e1e1e;
    border-top: 2px solid #1e1e1e;
    transform: rotate(45deg) translate(2px, 2px);
  }
  .chev.light {
    border-color: #aaa;
  }
  .chev.down {
    transform: rotate(225deg) translate(2px, 2px);
  }
  .tri {
    width: 0;
    height: 0;
    margin-left: 9px;
    border: 4px solid transparent;
    border-top: 6px solid #777;
    border-bottom: 0;
  }
  .hscroll {
    height: 17px;
    flex: none;
    display: flex;
    background: #efefef;
    color: #444;
  }
  .harrow {
    width: 17px;
    line-height: 15px;
    text-align: center;
    font-size: 16px;
  }
  .hthumb {
    flex: 1;
    background: #c9c9c9;
  }

  .settings {
    width: 281px;
    flex: none;
    box-sizing: border-box;
    border-left: 1px solid #e0e0e0;
  }
  .stabs {
    height: 48px;
    box-sizing: border-box;
    border-bottom: 1px solid #ddd;
    display: flex;
  }
  .stab {
    padding: 16px 16px 0;
    height: 48px;
    box-sizing: border-box;
  }
  .first-tab {
    padding-right: 15px;
  }
  .stab.active {
    border-bottom: 2px solid #3858e9;
  }
  .sclose {
    margin-left: auto;
    padding: 16px 20px 0 0;
  }
  .card {
    height: 83px;
    box-sizing: border-box;
    border-bottom: 1px solid #ddd;
    padding: 17px 16px 0;
    display: flex;
    gap: 12px;
    line-height: 25px;
  }
  .advanced {
    height: 50px;
    padding: 0 16px;
    display: flex;
    align-items: center;
    justify-content: space-between;
  }
  .crumbs {
    height: 25px;
    flex: none;
    box-sizing: border-box;
    border-top: 1px solid #e0e0e0;
    display: flex;
    align-items: center;
    gap: 12px;
    padding: 1px 0 0 26px;
  }
  .marks {
    position: absolute;
    left: 0;
    top: 0;
    pointer-events: none;
  }
  .note {
    position: absolute;
    left: 616px;
    top: 799px;
    font-family: "Liberation Sans", sans-serif;
    font-weight: 700;
    font-size: 35px;
    line-height: 35px;
    color: #f00;
    white-space: nowrap;
  }
</style>
